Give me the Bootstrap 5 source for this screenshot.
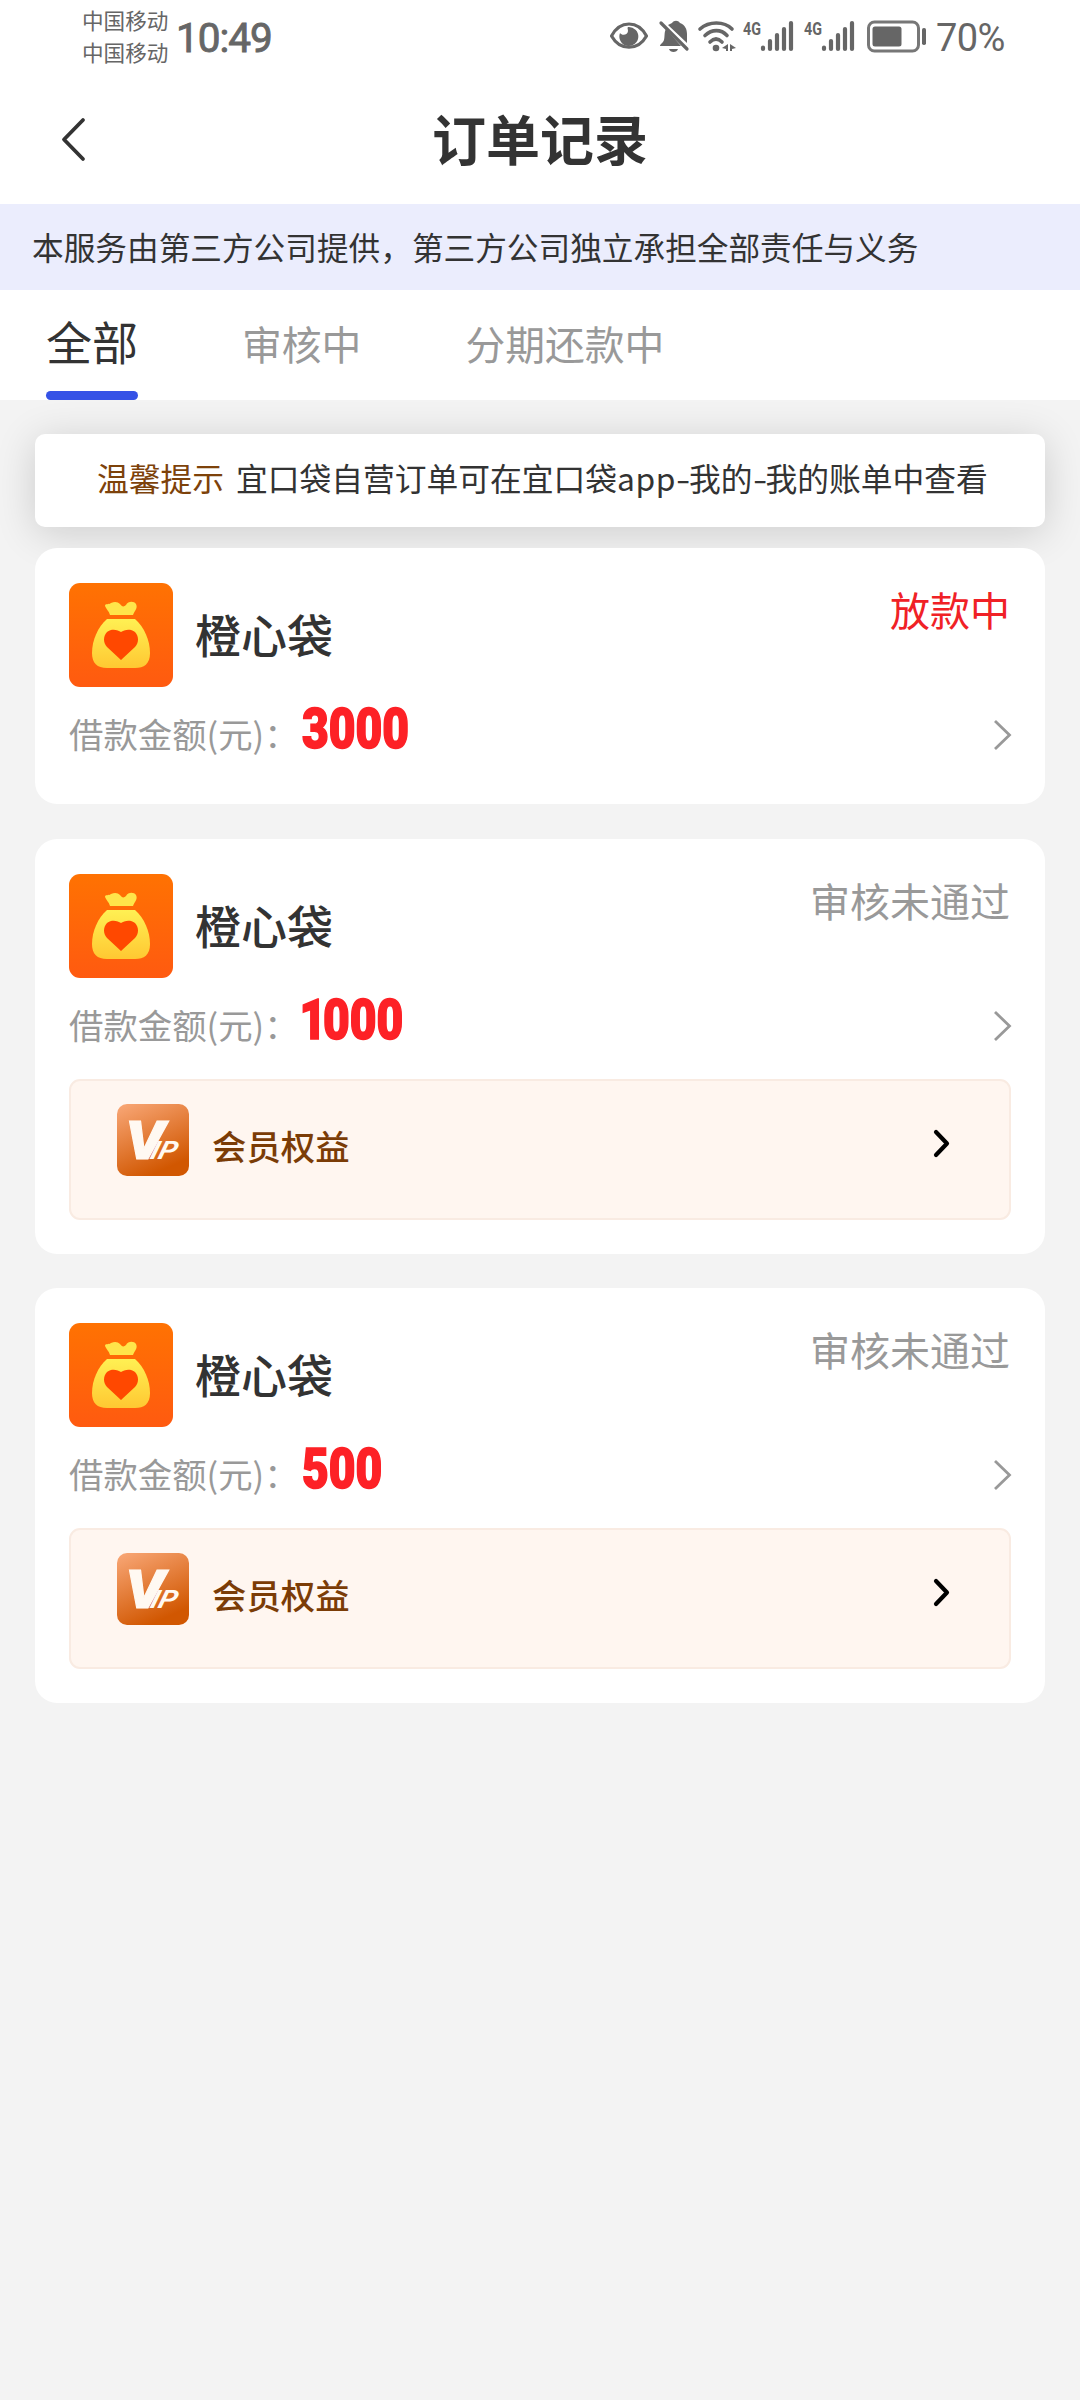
<!DOCTYPE html>
<html lang="zh-CN">
<head>
<meta charset="utf-8">
<meta name="viewport" content="width=device-width, initial-scale=1">
<title>订单记录</title>
<link href="https://cdn.jsdelivr.net/npm/bootstrap@5.3.0/dist/css/bootstrap.min.css" rel="stylesheet">
<style>
body{background:#f3f3f3;color:#333;font-family:"Noto Sans CJK SC",sans-serif;min-height:2400px;line-height:1}
svg{display:block;flex:none}
.status-bar{height:80px;padding-left:82px;color:#666}
.carriers{font-size:21.6px;line-height:32px;width:94px;padding-top:4px;white-space:nowrap}
.clock{font:400 40.5px/77px Roboto,sans-serif;letter-spacing:-1px;-webkit-text-stroke:.9px #666}
.status-icons{width:340px;height:80px;margin-right:-4px}
.battery-text{font:400 38px/77px Roboto,sans-serif;width:144px;letter-spacing:-.6px}
.title-bar{height:124px;padding-left:55px;padding-right:91px}
.title-bar h1{font-size:54px;font-weight:700;line-height:114px;margin:0 0 8px}
.title-bar svg{margin-top:-6px}
.notice{height:86px;line-height:84px;background:#ebedfd;padding-left:32px;font-size:31.66px;white-space:nowrap}
.tabs-row{height:110px;padding-left:46px}
.tabs-row .nav-link{padding:0;font-size:39.8px;line-height:105px;height:110px;color:#999;margin-right:104px}
.tabs-row .nav-link.active{font-size:46px;line-height:101px;color:#333;border-bottom:0}
.tabs-row .nav-link.active::after{content:"";display:block;height:9px;border-radius:5px;background:#3552e6}
.main-list{padding:34px 35px}
.tip{height:93px;line-height:87px;font-size:31.75px;border-radius:10px;box-shadow:0 6px 40px rgba(0,0,0,.16);padding-left:62px;margin-bottom:21px;white-space:nowrap}
.tip b{font-weight:400;color:#7d420a;margin-right:12px}
.tip i{font-style:normal;letter-spacing:.6px}
.tip em{font-style:normal;display:inline-block;width:13px;transform:scaleX(1.3);transform-origin:left}
.order{border:0;border-radius:22px;padding:35px 34px 34px;margin-bottom:35px;background:#fff}
.order + .order{margin-bottom:34px}
.order-name{font-size:46px;font-weight:500;margin-left:22px;line-height:101px}
.order-state{font-size:40px;line-height:52px;color:#999;margin-right:1px}
.state-red{color:#f02126}
.amount-row{height:83px}
.order + .order .amount-row{height:84px}
.amount-label{font-size:34.4px;line-height:92px;color:#999;width:233px;white-space:nowrap}
.amount-num{font:900 55px/85px Roboto,sans-serif;color:#fd2126;transform:scaleX(.84);transform-origin:left;-webkit-text-stroke:1.6px #fd2126}
.amount-num .one{margin:0 -4px 0 -3px}
.amount-row svg{margin:32px -2px 0 0}
.perk{margin-top:17px;height:141px;border:2px solid #f9ebe2;border-radius:11px;background:#fff6f0;padding:23px 58px 0 46px}
.perk span{font-size:34.4px;font-weight:500;color:#7b3c06;margin-left:23px;line-height:83px}
.perk .go{margin-top:25px}
</style>
</head>
<body>
<svg width="0" height="0" class="position-absolute" aria-hidden="true">
<defs>
<linearGradient id="gOrange" x1="0" y1="0" x2="0" y2="1"><stop offset="0" stop-color="#ff7202"/><stop offset="1" stop-color="#ff5a10"/></linearGradient>
<linearGradient id="gGold" x1="0" y1="0" x2="0" y2="1"><stop offset="0" stop-color="#fff053"/><stop offset="1" stop-color="#ffc832"/></linearGradient>
<linearGradient id="gVip" x1="0" y1="0" x2=".45" y2="1"><stop offset="0" stop-color="#f9a878"/><stop offset="1" stop-color="#d15701"/></linearGradient>
<symbol id="bag" viewBox="0 0 104 104">
<rect width="104" height="104" rx="11" fill="url(#gOrange)"/>
<path d="M36 23c0-3 4-1 6-3 4-2 7-1 9 1 2 3 4 3 6 1 2-4 8-4 10-1 2 4-1 6-3 11H41c-1-4-4-6-5-9Z" fill="#ffe54a"/>
<path d="M38 36H66C75 44 81 57 81 70C81 81 75 85 66 85H38C28 85 23 80 23 70C23 57 29 44 38 36Z" fill="url(#gGold)"/>
<path d="M52 77 38 64C34 60 34 53 38 49C43 45 49 47 52 49C55 47 61 45 66 49C70 53 70 60 66 64Z" fill="#ff4800"/>
</symbol>
<symbol id="vip" viewBox="0 0 72 72">
<rect width="72" height="72" rx="10" fill="url(#gVip)"/>
<g fill="#fff9f2" font-family="Roboto,sans-serif" font-style="italic">
<text x="8.500" y="55" font-size="53" font-weight="900" textLength="39" lengthAdjust="spacingAndGlyphs" stroke="#fff9f2" stroke-width="1">V</text>
<text transform="translate(32 55) skewX(-16)" font-size="25.500" font-weight="700" textLength="26" lengthAdjust="spacingAndGlyphs">IP</text></g>
</symbol>
<symbol id="more" viewBox="0 0 20 32"><path d="M2 2 16.500 16 2 30" fill="none" stroke="#999" stroke-width="2.800"/></symbol>
<symbol id="go" viewBox="0 0 18 30"><path d="M3 3 14 14.500 3 26" fill="none" stroke="#000" stroke-width="4.200" stroke-linecap="round" stroke-linejoin="round"/></symbol>
</defs>
</svg>

<header class="bg-white">
<div class="status-bar d-flex">
  <div class="carriers"><div>中国移动</div><div>中国移动</div></div>
  <div class="clock me-auto">10:49</div>
  <svg class="status-icons" viewBox="600 0 340 80" fill="#666">
    <path d="M611.500 36C620 20 638 20 646.500 36C638 51 620 51 611.500 36Z" fill="none" stroke="#666" stroke-width="3.200" stroke-linejoin="round"/>
    <path d="M628 27a9.500 9.500 0 1 1-8 6c2 3 8 2 8-2 0-2-1-3 0-4Z"/>
    <path d="M672 23c2-3 6-3 8 0 5 2 7 6 7 11v9L668 25ZM666 29 681 46H660c0-2 3-3 4-6 1-4 0-8 2-11ZM669 49h9c-1 4-8 4-9 0Z"/>
    <path d="M661 23 687 49" stroke="#666" stroke-width="3.200" stroke-linecap="round"/>
    <g fill="none" stroke="#666" stroke-width="3.600" stroke-linecap="round"><path d="M700 29C709 21 724 21 732 29M705 35.500C712 29 721 29 727 35.500M710 42C714 38 718 38 722 42"/></g>
    <circle cx="716" cy="48" r="3.300"/><path d="M728 44v7h-2v-2l-4-1ZM730 44v7h2v-2l4-1Z"/>
    <g id="signal"><text x="743" y="34.500" font-family="Roboto,sans-serif" font-weight="700" font-size="18" textLength="18" lengthAdjust="spacingAndGlyphs">4G</text>
    <path d="M763 47.500v1.500M770 41v8M777 35v14M784 29v20M791 23v26" stroke="#666" stroke-width="4.200" stroke-linecap="round"/></g>
    <use href="#signal" x="61"/>
    <rect x="868.500" y="22" width="50" height="29" rx="6" fill="none" stroke="#777" stroke-width="3"/>
    <rect x="872.500" y="26.500" width="29" height="20" rx="2.500"/><rect x="922" y="28" width="4" height="17" rx="1.800"/>
  </svg>
  <div class="battery-text">70%</div>
</div>
<div class="title-bar d-flex align-items-center justify-content-between">
  <svg width="36" height="48" viewBox="0 0 36 48"><path d="M28 5 9 24.500 28 44" fill="none" stroke="#333" stroke-width="3.800" stroke-linecap="round" stroke-linejoin="round"/></svg>
  <h1 class="flex-grow-1 text-center">订单记录</h1>
</div>
<div class="notice">本服务由第三方公司提供，第三方公司独立承担全部责任与义务</div>
<nav class="nav tabs-row flex-nowrap">
  <a class="nav-link active" href="#">全部</a><a class="nav-link" href="#">审核中</a><a class="nav-link" href="#">分期还款中</a>
</nav>
</header>

<main class="main-list">
<div class="tip bg-white"><b>温馨提示</b>宜口袋自营订单可在宜口袋<i>app</i><em>-</em>我的<em>-</em>我的账单中查看</div>

<section class="card order">
  <div class="d-flex"><svg width="104" height="104"><use href="#bag"/></svg><div class="order-name">橙心袋</div><div class="order-state state-red ms-auto">放款中</div></div>
  <div class="amount-row d-flex"><div class="amount-label">借款金额(元)：</div><div class="amount-num">3000</div><svg class="ms-auto" width="20" height="32"><use href="#more"/></svg></div>
</section>

<section class="card order">
  <div class="d-flex"><svg width="104" height="104"><use href="#bag"/></svg><div class="order-name">橙心袋</div><div class="order-state ms-auto">审核未通过</div></div>
  <div class="amount-row d-flex"><div class="amount-label">借款金额(元)：</div><div class="amount-num"><span class="one">1</span>000</div><svg class="ms-auto" width="20" height="32"><use href="#more"/></svg></div>
  <div class="perk d-flex align-items-start"><svg width="72" height="72"><use href="#vip"/></svg><span>会员权益</span><svg class="go ms-auto" width="18" height="30"><use href="#go"/></svg></div>
</section>

<section class="card order">
  <div class="d-flex"><svg width="104" height="104"><use href="#bag"/></svg><div class="order-name">橙心袋</div><div class="order-state ms-auto">审核未通过</div></div>
  <div class="amount-row d-flex"><div class="amount-label">借款金额(元)：</div><div class="amount-num">500</div><svg class="ms-auto" width="20" height="32"><use href="#more"/></svg></div>
  <div class="perk d-flex align-items-start"><svg width="72" height="72"><use href="#vip"/></svg><span>会员权益</span><svg class="go ms-auto" width="18" height="30"><use href="#go"/></svg></div>
</section>
</main>
<script src="https://cdn.jsdelivr.net/npm/bootstrap@5.3.0/dist/js/bootstrap.bundle.min.js"></script>
</body>
</html>
